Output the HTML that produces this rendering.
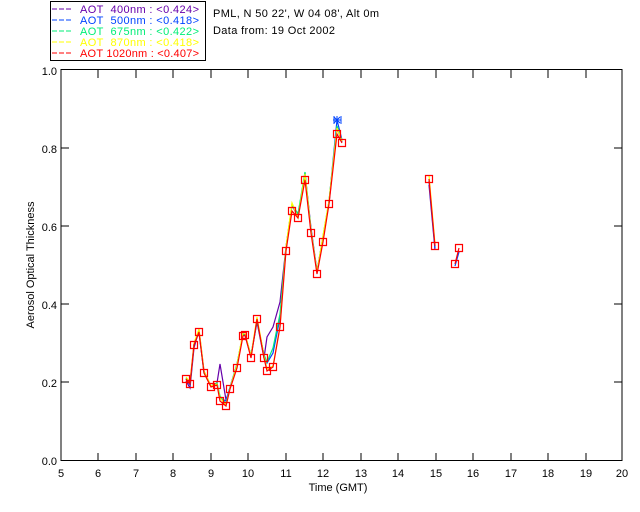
<!DOCTYPE html>
<html><head><style>
html,body{margin:0;padding:0;background:#fff;width:640px;height:512px;overflow:hidden}
svg{display:block}
text{font-family:"Liberation Sans",sans-serif;font-size:11px;fill:#000;white-space:pre}
</style></head><body>
<svg width="640" height="512" viewBox="0 0 640 512" xmlns="http://www.w3.org/2000/svg">
<rect x="50.5" y="1.5" width="155" height="59" fill="none" stroke="#000"/>
<g font-size="11">
<line x1="52" y1="9" x2="73" y2="9" stroke="#6600aa" stroke-dasharray="5,2"/><text x="80" y="13" style="fill:#6600aa" textLength="119" lengthAdjust="spacing">AOT  400nm : &lt;0.424&gt;</text>
<line x1="52" y1="20" x2="73" y2="20" stroke="#0044ff" stroke-dasharray="5,2"/><text x="80" y="24" style="fill:#0044ff" textLength="119" lengthAdjust="spacing">AOT  500nm : &lt;0.418&gt;</text>
<line x1="52" y1="31" x2="73" y2="31" stroke="#00ee77" stroke-dasharray="5,2"/><text x="80" y="35" style="fill:#00ee77" textLength="119" lengthAdjust="spacing">AOT  675nm : &lt;0.422&gt;</text>
<line x1="52" y1="42" x2="73" y2="42" stroke="#ffff00" stroke-dasharray="5,2"/><text x="80" y="46" style="fill:#ffff00" textLength="119" lengthAdjust="spacing">AOT  870nm : &lt;0.418&gt;</text>
<line x1="52" y1="53" x2="73" y2="53" stroke="#ff0000" stroke-dasharray="5,2"/><text x="80" y="57" style="fill:#ff0000" textLength="119" lengthAdjust="spacing">AOT 1020nm : &lt;0.407&gt;</text>
</g>
<text x="213" y="17" textLength="166" lengthAdjust="spacing">PML, N 50 22', W 04 08', Alt 0m</text>
<text x="213" y="34" textLength="122" lengthAdjust="spacing">Data from: 19 Oct 2002</text>
<rect x="61" y="69.5" width="561" height="391" fill="none" stroke="#000"/>
<g stroke="#000">
<path d="M98 461v-8M136 461v-8M173 461v-8M211 461v-8M248 461v-8M286 461v-8M323 461v-8M361 461v-8M398 461v-8M436 461v-8M473 461v-8M511 461v-8M548 461v-8M586 461v-8"/>
<path d="M98 70v8M136 70v8M173 70v8M211 70v8M248 70v8M286 70v8M323 70v8M361 70v8M398 70v8M436 70v8M473 70v8M511 70v8M548 70v8M586 70v8"/>
<path d="M61 382h8M61 304h8M61 226h8M61 148h8M622 382h-8M622 304h-8M622 226h-8M622 148h-8"/>
</g>
<g text-anchor="middle">
<text x="61" y="477">5</text><text x="98" y="477">6</text><text x="136" y="477">7</text><text x="173" y="477">8</text><text x="211" y="477">9</text><text x="248" y="477">10</text><text x="286" y="477">11</text><text x="323" y="477">12</text><text x="361" y="477">13</text><text x="398" y="477">14</text><text x="436" y="477">15</text><text x="473" y="477">16</text><text x="511" y="477">17</text><text x="548" y="477">18</text><text x="586" y="477">19</text><text x="622" y="477">20</text>
<text x="338" y="491">Time (GMT)</text>
</g>
<g text-anchor="end">
<text x="57" y="465">0.0</text><text x="57" y="387">0.2</text><text x="57" y="309">0.4</text><text x="57" y="231">0.6</text><text x="57" y="153">0.8</text><text x="57" y="75">1.0</text>
</g>
<text transform="translate(34,265) rotate(-90)" text-anchor="middle">Aerosol Optical Thickness</text>
<g fill="none" stroke-width="1.2">
<polyline stroke="#6600aa" points="186,381 190,388 194,348 199,330 204,371 211,386 217,383 220,364 226,400 230,388 237,366 243,334 245,336 251,356 257,322 264,358 267,337 273,327 280,302 286,247 292,205 298,217 305,173 311,228 317,271 323,237 329,203 337,128 342,142"/>
<polyline stroke="#0044ff" points="186,379 190,385 194,344 199,333 204,372 211,386 217,383 220,398 226,401 230,387 237,364 243,334 245,335 251,355 257,321 264,355 267,363 273,353 280,318 286,249 292,205 298,214 305,176 311,231 317,272 323,238 329,202 337,120 342,140"/>
<polyline stroke="#00ee77" points="186,378 190,384 194,344 199,331 204,373 211,386 217,383 220,396 226,404 230,388 237,364 243,334 245,335 251,355 257,320 264,355 267,362 273,348 280,314 286,247 292,204 298,214 305,172 311,230 317,272 323,236 329,201 337,126 342,141"/>
<polyline stroke="#ffff00" points="186,377 190,382 194,343 199,329 204,371 211,386 217,384 220,398 226,405 230,388 237,365 243,332 245,333 251,356 257,317 264,356 267,369 273,366 280,326 286,247 292,203 298,218 305,174 311,231 317,272 323,236 329,201 337,128 342,141"/>
<polyline stroke="#ff0000" points="186,379 190,384 194,345 199,332 204,373 211,387 217,385 220,401 226,406 230,389 237,368 243,336 245,335 251,358 257,319 264,358 267,371 273,367 280,327 286,251 292,211 298,218 305,180 311,233 317,274 323,242 329,204 337,134 342,143"/>
<polyline stroke="#6600aa" points="429,185 435,250"/>
<polyline stroke="#0044ff" points="429,181 435,248"/>
<polyline stroke="#ffff00" points="429,175 435,244"/>
<polyline stroke="#ff0000" points="429,179 435,246"/>
<polyline stroke="#0044ff" points="455,266 459,252"/>
<polyline stroke="#ff0000" points="455,264 459,248"/>
</g>
<g fill="none" stroke="#ff0000" stroke-width="1.2">
<path d="M182.5 375.5h7v7h-7zM186.5 380.5h7v7h-7zM190.5 341.5h7v7h-7zM195.5 328.5h7v7h-7zM200.5 369.5h7v7h-7zM207.5 383.5h7v7h-7zM213.5 381.5h7v7h-7zM216.5 397.5h7v7h-7zM222.5 402.5h7v7h-7zM226.5 385.5h7v7h-7zM233.5 364.5h7v7h-7zM239.5 332.5h7v7h-7zM241.5 331.5h7v7h-7zM247.5 354.5h7v7h-7zM253.5 315.5h7v7h-7zM260.5 354.5h7v7h-7zM263.5 367.5h7v7h-7zM269.5 363.5h7v7h-7zM276.5 323.5h7v7h-7zM282.5 247.5h7v7h-7zM288.5 207.5h7v7h-7zM294.5 214.5h7v7h-7zM301.5 176.5h7v7h-7zM307.5 229.5h7v7h-7zM313.5 270.5h7v7h-7zM319.5 238.5h7v7h-7zM325.5 200.5h7v7h-7zM333.5 130.5h7v7h-7zM338.5 139.5h7v7h-7zM425.5 175.5h7v7h-7zM431.5 242.5h7v7h-7zM455.5 244.5h7v7h-7zM451.5 260.5h7v7h-7z"/>
</g>
<g stroke="#0044ff" stroke-width="1">
<path d="M334 116v8M333 120h8M337 116v8M341 116v8"/>
<path d="M334 117l6 6M340 117l-6 6"/>
</g>
</svg>
</body></html>
